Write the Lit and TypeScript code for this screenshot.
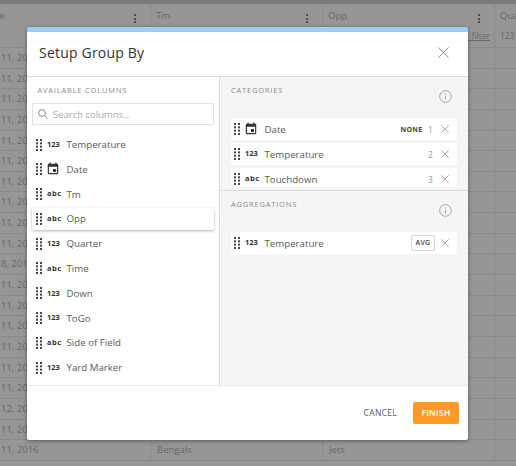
import { LitElement, css, html, nothing, svg } from "lit";
import { customElement } from "lit/decorators.js";

type ColumnKind = "num" | "text" | "date";

const AVAILABLE: Array<{ name: string; kind: ColumnKind; raised?: boolean }> = [
  { name: "Temperature", kind: "num" },
  { name: "Date", kind: "date" },
  { name: "Tm", kind: "text" },
  { name: "Opp", kind: "text", raised: true },
  { name: "Quarter", kind: "num" },
  { name: "Time", kind: "text" },
  { name: "Down", kind: "num" },
  { name: "ToGo", kind: "num" },
  { name: "Side of Field", kind: "text" },
  { name: "Yard Marker", kind: "num" },
];

const CATEGORIES: Array<{ name: string; kind: ColumnKind; order: number; none?: boolean }> = [
  { name: "Date", kind: "date", order: 1, none: true },
  { name: "Temperature", kind: "num", order: 2 },
  { name: "Touchdown", kind: "text", order: 3 },
];

// table rows behind the dialog, only the parts that peek out are visible
const ROW_DATES = [
  "11, 2016", "11, 2016", "11, 2016", "11, 2016", "11, 2016",
  "11, 2016", "11, 2016", "11, 2016", "11, 2016", "11, 2016",
  "8, 2016", "11, 2016", "11, 2016", "11, 2016", "11, 2016",
  "11, 2016", "11, 2016", "12, 2016", "11, 2016", "11, 2016",
];

const grip = html`
  <svg class="grip" width="6" height="12" viewBox="0 0 6 12" fill="#444">
    ${[0, 3.33, 6.67, 10].map(
      (y) => svg`
        <rect x="0" y=${y} width="2" height="2"></rect>
        <rect x="4" y=${y} width="2" height="2"></rect>
      `,
    )}
  </svg>
`;

const calendar = html`
  <svg class="cal" width="14" height="14" viewBox="0 0 24 24" fill="#333">
    <path
      d="M17 12h-5v5h5v-5zM16 1v2H8V1H6v2H5c-1.11 0-2 .9-2 2v14c0 1.1.89 2 2 2h14c1.1 0 2-.9 2-2V5c0-1.1-.9-2-2-2h-1V1h-2zm3 18H5V8h14v11z"
    />
  </svg>
`;

const closeIcon = (size: number, color: string) => html`
  <svg width=${size} height=${size} viewBox="0 0 10 10" fill="none" stroke=${color} stroke-width=${10 / size}>
    <path d="M.4.4l9.2 9.2M9.6.4L.4 9.6" />
  </svg>
`;

const infoIcon = html`
  <svg class="info" width="13" height="13" viewBox="0 0 13 13" fill="none" stroke="#a6a6a6">
    <circle cx="6.5" cy="6.5" r="5.8"></circle>
    <path d="M6.5 5.8v3.6" stroke-width="1.1" />
    <circle cx="6.5" cy="3.9" r=".7" fill="#a6a6a6" stroke="none"></circle>
  </svg>
`;

function typeIcon(kind: ColumnKind) {
  if (kind === "date") return calendar;
  return html`<span class="type ${kind}">${kind === "num" ? "123" : "abc"}</span>`;
}

@customElement("app-root")
export class AppRoot extends LitElement {
  static styles = css`
    :host {
      display: block;
      position: relative;
      width: 516px;
      height: 466px;
      overflow: hidden;
      background: #fff;
      font-family: "Open Sans", "Liberation Sans", sans-serif;
      color: #5a5a5a;
    }

    /* table behind the dialog */
    .table {
      margin-left: -21px;
      width: 600px;
      border-top: 4px solid #cfcfcf;
    }
    .head,
    .row {
      display: grid;
      grid-template-columns: repeat(4, 172px);
      border-bottom: 1px solid #eaeaea;
    }
    .head {
      height: 43px;
    }
    .row {
      height: 19.65px;
      font-size: 9.5px;
      line-height: 19.65px;
      color: #b4b4b4;
    }
    .cell {
      padding-left: 6px;
      border-right: 1px solid #eaeaea;
      white-space: nowrap;
      overflow: hidden;
    }
    .cell.date {
      padding-left: 22px;
    }
    .hcell {
      position: relative;
      padding: 5px 0 0 5px;
      border-right: 1px solid #eaeaea;
      font-size: 9.5px;
      color: #b4b4b4;
      white-space: nowrap;
    }
    .kebab {
      position: absolute;
      top: 10px;
      right: 14px;
      display: flex;
      flex-direction: column;
      gap: 1.5px;
    }
    .kebab i {
      width: 2px;
      height: 2px;
      background: #8c8c8c;
    }
    .hint {
      position: absolute;
      top: 26px;
      left: 5px;
      right: 4px;
      display: flex;
      justify-content: space-between;
      font-size: 8.5px;
      color: #b4b4b4;
    }
    .scrim {
      position: absolute;
      inset: 0;
      background: rgba(0, 0, 0, 0.41);
    }

    /* dialog */
    .modal {
      position: absolute;
      left: 27px;
      top: 27px;
      width: 441px;
      height: 413px;
      display: flex;
      flex-direction: column;
      background: #fff;
      border-top: 5px solid #9bcef4;
      border-radius: 2px;
      box-sizing: border-box;
      box-shadow: 0 1px 4px rgba(0, 0, 0, 0.4);
    }
    .title-bar {
      flex: none;
      height: 45px;
      box-sizing: border-box;
      display: flex;
      align-items: center;
      justify-content: space-between;
      padding: 0 19px 3px 12px;
      border-bottom: 1px solid #dcdcdc;
    }
    h1 {
      margin: 0;
      font-size: 14px;
      font-weight: 500;
      letter-spacing: 0.2px;
      color: #333;
    }
    .body {
      flex: 1;
      min-height: 0;
      display: flex;
    }
    .left {
      flex: none;
      width: 193px;
      box-sizing: border-box;
      padding: 0 5px;
      border-right: 1px solid #dcdcdc;
    }
    .label {
      font-size: 7.5px;
      font-weight: 500;
      letter-spacing: 0.8px;
      line-height: 11px;
      color: #8c8c8c;
    }
    .left .label {
      padding: 8px 0 0 5.5px;
    }
    .search {
      display: flex;
      align-items: center;
      gap: 5px;
      height: 22px;
      box-sizing: border-box;
      margin-top: 7px;
      padding-left: 5px;
      border: 1px solid #e2e2e2;
      font-size: 9.5px;
      color: #aaa;
      border-radius: 1px;
    }
    .list {
      margin-top: 8.5px;
      display: flex;
      flex-direction: column;
      gap: 2.8px;
    }
    .item {
      display: flex;
      align-items: center;
      height: 22px;
      padding-left: 4px;
      font-size: 9.7px;
      border-radius: 2px;
    }
    .item.raised {
      box-shadow: 0 1px 3px rgba(0, 0, 0, 0.3);
    }
    .grip {
      flex: none;
      margin-right: 5px;
    }
    .type {
      flex: none;
      width: 15px;
      margin-right: 4.5px;
      font-size: 7.5px;
      line-height: 1;
      font-weight: 700;
      color: #333;
    }
    .type.text {
      letter-spacing: 0.5px;
    }
    .cal {
      flex: none;
      margin: -1px 6.5px 0 -1px;
    }

    .right {
      flex: 1;
      min-width: 0;
      display: flex;
      flex-direction: column;
      background: #f5f5f5;
    }
    .section {
      position: relative;
      box-sizing: border-box;
      padding: 8px 11px 0;
    }
    .section.cats {
      height: 114px;
      border-bottom: 1px solid #dcdcdc;
    }
    .info {
      position: absolute;
      top: 13px;
      right: 16px;
    }
    .cards {
      display: flex;
      flex-direction: column;
      gap: 3px;
      margin-top: 22px;
    }
    .section.cats .cards {
      height: 69px;
      overflow: hidden;
    }
    .section.aggs {
      padding-top: 7.5px;
    }
    .section.aggs .cards {
      margin-top: 22.5px;
    }
    .card {
      flex: none;
      display: flex;
      align-items: center;
      height: 22px;
      padding: 0 8px 0 3px;
      background: #fff;
      border-radius: 2px;
      font-size: 9.7px;
    }
    .card .name {
      flex: 1;
      white-space: nowrap;
    }
    .none {
      font-size: 7px;
      font-weight: 700;
      letter-spacing: 0.3px;
      color: #444;
      margin-right: 5.5px;
    }
    .order {
      width: 6px;
      margin-right: 7px;
      font-size: 8.5px;
      color: #999;
    }
    .avg {
      font-size: 7px;
      font-weight: 600;
      color: #444;
      letter-spacing: 0.3px;
      line-height: 14px;
      padding: 0 3.5px;
      border: 1px solid #d8d8d8;
      border-radius: 2px;
      margin-right: 6px;
    }

    .footer {
      flex: none;
      height: 55px;
      display: flex;
      align-items: center;
      justify-content: flex-end;
      gap: 16px;
      padding: 0 9px 1px 0;
      border-top: 1px solid #e8e8e8;
      box-sizing: border-box;
      font-size: 8.5px;
      letter-spacing: 0.3px;
    }
    .finish {
      width: 46px;
      height: 22px;
      display: flex;
      align-items: center;
      justify-content: center;
      background: #ff9a26;
      color: #fff;
      font-weight: 600;
      border-radius: 2px;
    }
  `;

  private renderHeader(name: string, hint: unknown) {
    return html`
      <div class="hcell">
        ${name}
        <span class="kebab"><i></i><i></i><i></i></span>
        ${hint}
      </div>
    `;
  }

  render() {
    return html`
      <div class="table">
        <div class="head">
          ${this.renderHeader("Date", nothing)}
          ${this.renderHeader("Tm", nothing)}
          ${this.renderHeader("Opp", html`<span class="hint"><span></span><u>+ filter</u></span>`)}
          ${this.renderHeader("Quarter", html`<span class="hint"><span>123</span></span>`)}
        </div>
        ${ROW_DATES.map(
          (d, i) => html`
            <div class="row">
              <div class="cell date">${d}</div>
              <div class="cell">${i === 19 ? "Bengals" : ""}</div>
              <div class="cell">${i === 19 ? "Jets" : ""}</div>
              <div class="cell"></div>
            </div>
          `,
        )}
      </div>
      <div class="scrim"></div>

      <div class="modal">
        <div class="title-bar">
          <h1>Setup Group By</h1>
          ${closeIcon(11, "#8c8c8c")}
        </div>
        <div class="body">
          <div class="left">
            <div class="label">AVAILABLE COLUMNS</div>
            <div class="search">
              <svg width="10" height="10" viewBox="0 0 10 10" fill="none" stroke="#8a8a8a" stroke-width="1">
                <circle cx="4" cy="4" r="3.4"></circle>
                <path d="M6.5 6.5L9.7 9.7" />
              </svg>
              Search columns...
            </div>
            <div class="list">
              ${AVAILABLE.map(
                (c) => html`
                  <div class="item ${c.raised ? "raised" : ""}">${grip}${typeIcon(c.kind)}${c.name}</div>
                `,
              )}
            </div>
          </div>
          <div class="right">
            <div class="section cats">
              <div class="label">CATEGORIES</div>
              ${infoIcon}
              <div class="cards">
                ${CATEGORIES.map(
                  (c) => html`
                    <div class="card">
                      ${grip}${typeIcon(c.kind)}
                      <span class="name">${c.name}</span>
                      ${c.none ? html`<span class="none">NONE</span>` : nothing}
                      <span class="order">${c.order}</span>
                      ${closeIcon(8, "#a8a8a8")}
                    </div>
                  `,
                )}
              </div>
            </div>
            <div class="section aggs">
              <div class="label">AGGREGATIONS</div>
              ${infoIcon}
              <div class="cards">
                <div class="card">
                  ${grip}${typeIcon("num")}
                  <span class="name">Temperature</span>
                  <span class="avg">AVG</span>
                  ${closeIcon(8, "#a8a8a8")}
                </div>
              </div>
            </div>
          </div>
        </div>
        <div class="footer">
          <span>CANCEL</span>
          <span class="finish">FINISH</span>
        </div>
      </div>
    `;
  }
}

declare global {
  interface HTMLElementTagNameMap {
    "app-root": AppRoot;
  }
}
